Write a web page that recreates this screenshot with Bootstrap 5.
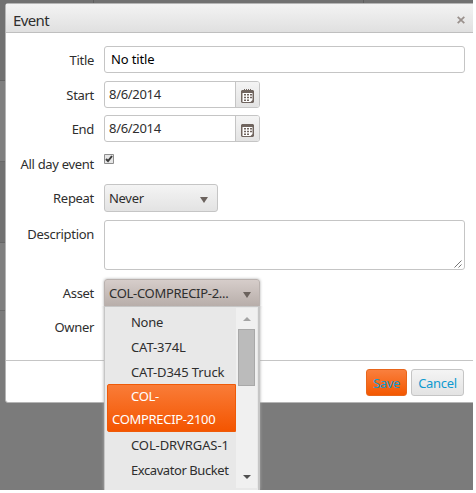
<!DOCTYPE html>
<html lang="en">
<head>
<meta charset="utf-8">
<title>Event</title>
<link rel="stylesheet" href="https://cdn.jsdelivr.net/npm/bootstrap@5.3.0/dist/css/bootstrap.min.css">
<style>
body{width:476px;height:493px;overflow:hidden;background:#fff;font:13px/20px "Noto Sans","Open Sans",sans-serif;color:#2e2e2e;letter-spacing:-.3px}
.backdrop-area{width:473px;height:490px;padding:3px 0 0 5px;background:linear-gradient(#717171 0 80px,#636363 80px 81px,#7f7f7f 81px 161px,#686868 161px 162px,#717171 162px 242px,#666 242px 243px,#7f7f7f 243px 310px,#6a6a6a 310px 311px,#7b7b7b 311px)}
.tick{top:0;width:1px;height:3px;background:#5f5f5f}
.tick-a{left:93px}
.tick-b{left:363px}
.event-window{width:480px;height:400px;border:1px solid #b5b5b5;border-radius:3px 0 0 3px;background:#fff}
.event-head{height:28px;padding:3px 9px 0 7px;width:468px;font-size:15px;letter-spacing:-.6px}
.event-top{background:linear-gradient(#f3f3f3,#e0e0e0);border-bottom:1px solid #bfbfbf}
.event-body{height:327px;padding-top:13px}
.line{display:grid;grid-template-columns:88px 361px;column-gap:10px;align-items:start}
.line>label{text-align:right;padding-top:4px}
.box{height:27px;border:1px solid #c5c5c5;border-radius:3px;background:#fff;padding:0 5px 0 4px;line-height:24px}
.title-box{padding-left:6px;letter-spacing:-.15px}
.grey{background:linear-gradient(#f4f4f4,#e3e3e3)}
.date{width:156px;padding:0;overflow:hidden}
.date .pick{width:24px;height:25px;border-left:1px solid #c5c5c5}
.date svg{margin-top:2px}
.arrow{border:4px solid transparent;border-top:6px solid #6b625d;border-bottom:0}
.event-foot{border-top:1px solid #c5c5c5;padding:8px 0 0 360px;gap:4px;height:42px}
.event-foot .btn{height:27px;padding:0;font-size:13px;line-height:27px;border-radius:3px;color:#0f9ad0;letter-spacing:-.3px}
.save{width:41px;border-color:#e8661b;background:linear-gradient(#f97f3e,#f45800)}
.cancel{width:53px;border-color:#c5c5c5}
.asset{width:156px;background:linear-gradient(#d6cdca,#b8aeaa);border-color:#b9b1ae;border-radius:3px 3px 0 0;box-shadow:0 0 3px #aaa}
.options{left:104px;top:306px;width:156px;height:184px;background:#e8e8e8;border:solid #c6c6c6;border-width:1px 2px 0 1px;padding:1px 1px 2px 2px;box-shadow:0 0 3px #aaa;clip-path:inset(0 -4px 0 -4px)}
.options ul{width:129px;padding-top:1px}
.options li{height:25px;padding:2px 0 0 5px;text-indent:19px;line-height:23px;white-space:nowrap}
.options li.chosen{height:48px;padding:0 0 0 4px;color:#fff;border:1px solid #ef5a08;border-radius:2px 0 0 2px;background:linear-gradient(#f97c38,#f45500)}
.snug{letter-spacing:-.43px}
.loose{letter-spacing:-.1px}
.scroller{width:21px;height:180px;background:#f0f0f0;padding:9px 0}
.thumb{width:17px;height:57px;border:1px solid #a8a8a8;background:#bbb;margin-top:8px}
.up{border:4px solid transparent;border-bottom:4px solid #a3a3a3;border-top:0}
.down{border:4px solid transparent;border-top:4px solid #4f4f4f;border-bottom:0}
</style>
</head>
<body>
<main class="backdrop-area position-relative overflow-hidden">
 <span class="tick tick-a position-absolute"></span><span class="tick tick-b position-absolute"></span>
 <section class="event-window">
  <header class="event-top"><div class="event-head d-flex align-items-center justify-content-between"><span>Event</span>
   <svg width="8" height="8" viewBox="0 0 8 8" stroke="#9a918d" stroke-width="1.8"><path d="M.7.9 7.3 7.1M7.3.9.7 7.1"/></svg></div></header>
  <form class="event-body">
   <div class="line" style="height:35px"><label>Title</label><div class="box title-box text-black">No title</div></div>
   <div class="line" style="height:34px"><label>Start</label><div class="box date d-flex justify-content-between"><span class="ps-1">8/6/2014</span><span class="pick grey d-flex align-items-center justify-content-center"><svg width="13" height="14" viewBox="0 0 13 14"><path fill="#70655f" d="M1 1h2V0h1v1h1V0h1v1h1V0h1v1h1V0h1v1h2l1 1v11l-1 1H1l-1-1V2z"/><path fill="#fff" d="M1.5 4h10v7l-2 2h-8z"/><path fill="#70655f" d="M3 5h2v1.5H3zm3 0h2v1.5H6zm3 0h2v1.5H9zM3 7.7h2v1.5H3zm3 0h2v1.5H6zm3 0h2v1.5H9zM3 10.5h2v1.5H3zm3 0h2v1.5H6z"/></svg></span></div></div>
   <div class="line" style="height:35px"><label>End</label><div class="box date d-flex justify-content-between"><span class="ps-1">8/6/2014</span><span class="pick grey d-flex align-items-center justify-content-center"><svg width="13" height="14" viewBox="0 0 13 14"><path fill="#70655f" d="M1 1h11l1 1v11l-1 1H1l-1-1V2z"/><path fill="#fff" d="M1.5 4h10v7l-2 2h-8z"/><path fill="#70655f" d="M3 5h2v1.5H3zm3 0h2v1.5H6zm3 0h2v1.5H9zM3 7.7h2v1.5H3zm3 0h2v1.5H6zm3 0h2v1.5H9zM3 10.5h2v1.5H3zm3 0h2v1.5H6z"/></svg></span></div></div>
   <div class="line" style="height:34px"><label>All day event</label><svg class="mt-1" width="10" height="10" viewBox="0 0 10 10"><path fill="#e6e6e6" stroke="#8e8e8e" d="M.5.5h9v9h-9z"/><path fill="none" stroke="#3b3b3b" stroke-width="2" d="M2 5l2 2 4-5"/></svg></div>
   <div class="line" style="height:36px"><label>Repeat</label><div class="box grey d-flex justify-content-between align-items-center" style="width:114px;height:28px"><span>Never</span><i class="arrow" style="margin:3px 4px 0 0"></i></div></div>
   <div class="line" style="height:59px"><label>Description</label><div class="box d-flex align-items-end justify-content-end" style="height:50px;padding:1px 2px"><svg width="8" height="8" viewBox="0 0 8 8" stroke="#666" stroke-width=".9"><path d="M.5 7.5l7-7M4.5 7.5l3-3"/></svg></div></div>
   <div class="line" style="height:34px"><label>Asset</label><div class="box asset d-flex justify-content-between align-items-center" style="height:28px"><span>COL-COMPRECIP-2...</span><i class="arrow" style="margin:3px 3px 0 0"></i></div></div>
   <div class="line"><label>Owner</label></div>
  </form>
  <footer class="event-foot d-flex"><button type="button" class="btn save">Save</button><button type="button" class="btn cancel grey">Cancel</button></footer>
 </section>
 <div class="options position-absolute d-flex">
  <ul class="list-unstyled mb-0"><li>None</li><li class="loose">CAT-374L</li><li class="loose">CAT-D345 Truck</li><li class="chosen">COL-<br>COMPRECIP-2100</li><li class="loose">COL-DRVRGAS-1</li><li class="snug">Excavator Bucket</li></ul>
  <div class="scroller d-flex flex-column align-items-center"><i class="up"></i><i class="thumb"></i><i class="down mt-auto"></i></div>
 </div>
</main>
<script src="https://cdn.jsdelivr.net/npm/bootstrap@5.3.0/dist/js/bootstrap.bundle.min.js"></script>
</body>
</html>
